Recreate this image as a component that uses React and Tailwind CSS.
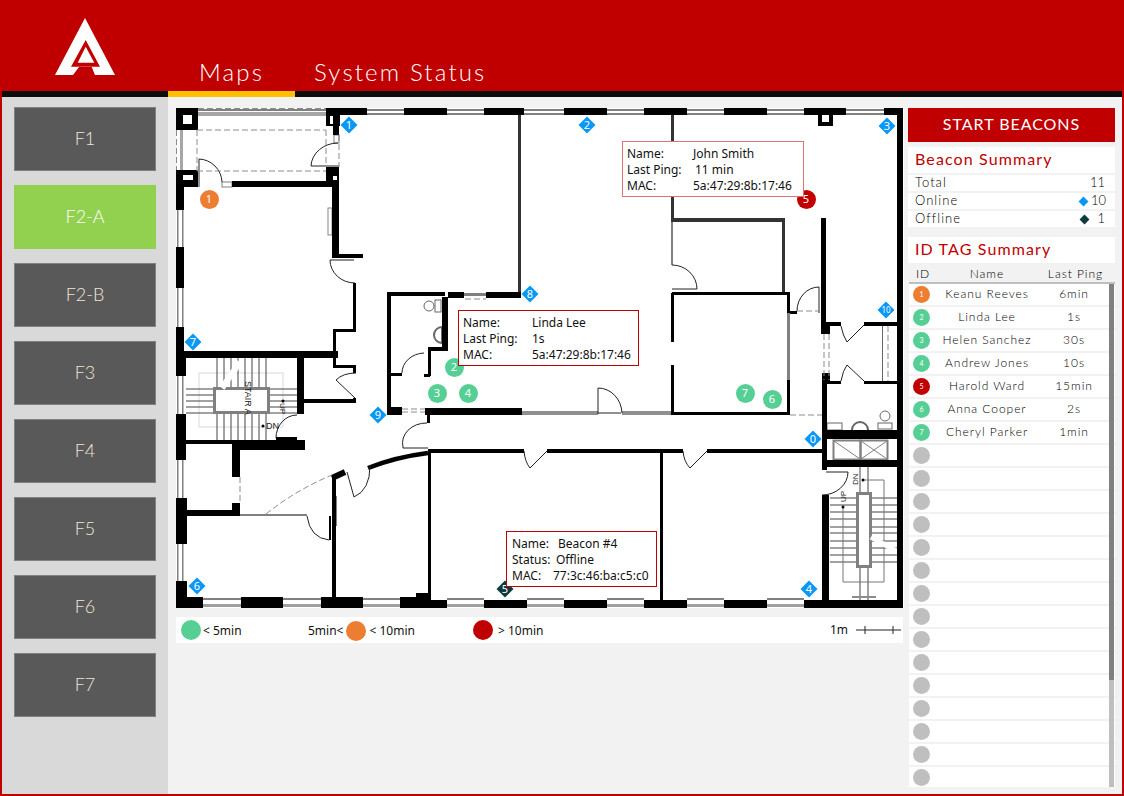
const uiFont = { fontFamily: 'Lato, sans-serif' };

const floors = ['F1', 'F2-A', 'F2-B', 'F3', 'F4', 'F5', 'F6', 'F7'];

const tags = [
    { id: 1, name: 'Keanu Reeves', ping: '6min', color: 'bg-[#ed7d31]' },
    { id: 2, name: 'Linda Lee', ping: '1s', color: 'bg-[#56cf95]' },
    { id: 3, name: 'Helen Sanchez', ping: '30s', color: 'bg-[#56cf95]' },
    { id: 4, name: 'Andrew Jones', ping: '10s', color: 'bg-[#56cf95]' },
    { id: 5, name: 'Harold Ward', ping: '15min', color: 'bg-[#c00000]' },
    { id: 6, name: 'Anna Cooper', ping: '2s', color: 'bg-[#56cf95]' },
    { id: 7, name: 'Cheryl Parker', ping: '1min', color: 'bg-[#56cf95]' },
    ...Array.from({ length: 15 }, () => ({ color: 'bg-[#bfbfbf]' })),
];

// walls as [x1, y1, x2, y2] in page coordinates
const walls = [
    // outer pieces
    [176, 108, 198, 130], [176, 170, 198, 187], [176, 187, 184, 210], [176, 247, 184, 288], [176, 327, 184, 351],
    [176, 351, 186, 376], [176, 414, 186, 460], [176, 498, 187, 544], [176, 581, 187, 608], [176, 597, 203, 608],
    [326, 108, 367, 115], [404, 108, 447, 115], [484, 108, 524, 115], [564, 108, 607, 115], [644, 108, 687, 115],
    [724, 108, 767, 115], [804, 108, 846, 115], [884, 108, 903, 115], [897, 108, 903, 608],
    [241, 597, 283, 608], [321, 597, 363, 608], [400, 597, 427, 608], [416, 593, 431, 600], [427, 600, 447, 608],
    [484, 600, 527, 608], [564, 600, 607, 608], [644, 600, 687, 608], [724, 600, 767, 608], [804, 600, 903, 608],
    // upper left room
    [326, 108, 340, 126], [333, 126, 339, 135], [326, 167, 339, 187], [232, 181, 332, 187], [332, 167, 339, 255],
    [332, 254, 363, 258], [353, 283, 356, 331], [333, 329, 356, 332], [333, 330, 336, 353], [181, 351, 338, 358],
    [333, 352, 336, 368], [333, 365, 356, 368], [353, 365, 356, 373], [353, 398, 356, 403], [297, 358, 304, 414],
    [304, 399, 356, 403],
    // stair lower wall
    [185, 440, 232, 444], [232, 440, 305, 450], [276, 437, 297, 440], [232, 444, 240, 477], [232, 503, 240, 516],
    [185, 510, 240, 516], [329, 516, 331, 540], [332, 478, 336, 597],
    // middle offices
    [387, 292, 391, 415], [387, 292, 445, 296], [442, 297, 448, 350], [448, 292, 464, 298], [486, 292, 521, 298],
    [428, 347, 448, 351], [428, 347, 431, 376], [424, 374, 430, 377], [390, 373, 402, 376], [387, 407, 402, 415],
    [425, 408, 522, 415], [427, 415, 430, 423], [428, 452, 431, 593], [428, 449, 524, 453], [547, 449, 683, 453],
    [660, 452, 663, 600], [707, 449, 822, 453],
    // right rooms
    [671, 293, 674, 342], [671, 365, 674, 415], [671, 412, 790, 415], [672, 292, 790, 295], [787, 292, 790, 313],
    [787, 380, 790, 415], [790, 311, 797, 314],
    [821, 218, 826, 334], [822, 322, 830, 334], [826, 322, 841, 326], [864, 322, 897, 326],
    [822, 373, 830, 381], [826, 381, 841, 384], [864, 381, 897, 384], [822, 381, 827, 470], [827, 430, 897, 439],
    [827, 460, 897, 467], [822, 495, 829, 600],
];

// the lighter partition walls that read as dark grey in the plan
const partitions = [
    [518, 110, 521, 292], [671, 110, 674, 222], [672, 218, 785, 222], [782, 220, 785, 292],
];

const windowsH = [[198, 326], [367, 404], [447, 484], [524, 564], [607, 644], [687, 724], [767, 804], [846, 884]];
const windowsB = [[203, 241], [283, 321], [363, 400], [447, 484], [527, 564], [607, 644], [687, 724], [767, 804]];
const windowsV = [[210, 247], [288, 327], [376, 414], [460, 498], [544, 581]];

const doors = [
    'M199 187V159A24 24 0 0 1 222 182',
    'M338 143A27 24 0 0 0 311 166H339',
    'M354 260H330A25 23 0 0 0 355 283',
    'M356 373Q343 373 336 380L355 398',
    'M297 415A21 23 0 0 0 276 438',
    'M424 353A23 20 0 0 0 402 373',
    'M347 472L354 497Q370 490 370 466',
    'M307 516Q310 538 329 540',
    'M403 447A24 20 0 0 1 427 423',
    'M428 448H403V447',
    'M524 451Q525 462 530 468L547 451',
    'M683 451Q684 462 690 468L707 451',
    'M598 414V388A24 26 0 0 1 622 413',
    'M598 413H621',
    'M672 265A25 24 0 0 1 697 289H672',
    'M819 313V287A22 24 0 0 0 797 311',
    'M841 326Q843 336 847 342L864 325',
    'M841 381Q843 370 847 365L864 381',
    'M826 472H848A26 23 0 0 1 822 495',
];

const leftTreadsX = [217, 224, 231, 238, 245, 252, 259, 266];
const leftTreadsY = [389, 395, 401, 407, 413];
const rightTreadsY = [498, 505, 512, 519, 527, 533, 541, 548, 555, 562];

function FloorPlan() {
    return (
        <svg className="block w-[728px] h-[500px]" viewBox="176 108 728 500">
            <rect x="176" y="108" width="728" height="500" fill="#fff" />
            {/* exterior glazing */}
            {windowsH.map(([a, b]) => (
                <g key={a}>
                    <rect x={a} y="109" width={b - a} height="2" fill="#808080" />
                    <rect x={a} y="113" width={b - a} height="2" fill="#808080" />
                </g>
            ))}
            {windowsB.map(([a, b]) => (
                <g key={a}>
                    <rect x={a} y="598" width={b - a} height="2" fill="#808080" />
                    <rect x={a} y="604" width={b - a} height="3" fill="#a0a0a0" />
                </g>
            ))}
            {windowsV.map(([a, b]) => (
                <g key={a}>
                    <rect x="177" y={a} width="1.5" height={b - a} fill="#808080" />
                    <rect x="182" y={a} width="1.5" height={b - a} fill="#808080" />
                </g>
            ))}
            <rect x="180" y="130" width="3" height="40" fill="#a6a6a6" />
            <rect x="222" y="182" width="10" height="5" fill="#fff" stroke="#808080" />
            <rect x="334" y="135" width="5" height="8" fill="#fff" stroke="#808080" />

            {/* stair A */}
            <rect x="199" y="373" width="84" height="54" fill="none" stroke="#d9d9d9" />
            {leftTreadsX.map((x) => (
                <g key={x} stroke="#444">
                    <line x1={x} y1="358" x2={x} y2="387" />
                    <line x1={x} y1="413" x2={x} y2="440" />
                </g>
            ))}
            {leftTreadsY.map((y) => (
                <g key={y} stroke="#444">
                    <line x1="186" y1={y} x2="213" y2={y} />
                    <line x1="269" y1={y} x2="297" y2={y} />
                </g>
            ))}
            <rect x="214.5" y="388.5" width="54" height="24" fill="#fff" stroke="#808080" strokeWidth="3" />
            <path d="M222 388L240 362" stroke="#fff" strokeWidth="6" />
            <text transform="translate(245 381) rotate(90)" fontSize="9" fontFamily="Liberation Sans, sans-serif" fill="#222">STAIR A</text>
            <text transform="translate(280 403) rotate(90)" fontSize="8" fontFamily="Liberation Sans, sans-serif" fill="#222">UP</text>
            <circle cx="283" cy="401" r="1.5" fill="#000" />
            <circle cx="263" cy="426" r="1.5" fill="#000" />
            <text x="266" y="429" fontSize="9" fontFamily="Liberation Sans, sans-serif" fill="#222">DN</text>

            {/* right stair */}
            {rightTreadsY.map((y) => (
                <g key={y} stroke="#444">
                    <line x1="830" y1={y} x2="856" y2={y} />
                    <line x1="872" y1={y} x2="897" y2={y} />
                </g>
            ))}
            <g stroke="#444" fill="none">
                <line x1="860" y1="467" x2="860" y2="600" />
                <line x1="868" y1="467" x2="868" y2="600" />
                <path d="M863 480H884V582H843V507" stroke="#777" />
            </g>
            <rect x="857.5" y="493.5" width="13" height="73" fill="#fff" stroke="#808080" strokeWidth="3" />
            <path d="M871 537L898 552" stroke="#fff" strokeWidth="5" />
            <circle cx="863" cy="480" r="1.5" fill="#000" />
            <circle cx="843" cy="507" r="1.5" fill="#000" />
            <text transform="translate(858 485) rotate(-90)" fontSize="8" fontFamily="Liberation Sans, sans-serif" fill="#222">DN</text>
            <text transform="translate(846 502) rotate(-90)" fontSize="8" fontFamily="Liberation Sans, sans-serif" fill="#222">UP</text>
            <line x1="852" y1="597" x2="876" y2="597" stroke="#8c8c8c" strokeWidth="2" />

            {/* elevators */}
            <g stroke="#808080" fill="none">
                <rect x="833.5" y="440.5" width="27" height="19" strokeWidth="2" />
                <rect x="860.5" y="440.5" width="27" height="19" strokeWidth="2" />
                <path d="M834 441L860 459M861 459L887 441M861 441L887 459" />
            </g>

            {/* plumbing */}
            <g stroke="#666" fill="#fff">
                <circle cx="429" cy="306" r="5" />
                <rect x="435" y="300" width="6" height="12" />
                <path d="M442 327A8 8 0 0 0 442 343Z" strokeWidth="2" />
                <circle cx="885" cy="416" r="5" />
                <rect x="878" y="423" width="14" height="6" />
                <path d="M852 430A8 8 0 0 1 860 422A8 8 0 0 1 868 430" strokeWidth="2" />
                <rect x="827" y="423" width="15" height="7" />
            </g>

            {/* grey partitions */}
            <rect x="240" y="514" width="67" height="2" fill="#808080" />
            <rect x="522" y="411" width="76" height="4" fill="#8f8f8f" />
            <rect x="622" y="411" width="49" height="4" fill="#8f8f8f" />
            <rect x="671" y="222" width="2" height="43" fill="#808080" />
            <rect x="787" y="313" width="3" height="67" fill="#808080" />
            <rect x="464" y="293" width="22" height="3" fill="#808080" />
            <rect x="328" y="208" width="4" height="27" fill="#fff" stroke="#888" />
            <rect x="335" y="496" width="2" height="30" fill="#808080" />
            <rect x="198" y="112" width="128" height="4" fill="#a6a6a6" />
            <rect x="882" y="326" width="1" height="55" fill="#666" />

            {/* walls */}
            {partitions.map(([x1, y1, x2, y2]) => (
                <rect key={`${x1}-${y1}`} x={x1} y={y1} width={x2 - x1} height={y2 - y1} fill="#333" />
            ))}
            {walls.map(([x1, y1, x2, y2]) => (
                <rect key={`${x1}-${y1}-${x2}-${y2}`} x={x1} y={y1} width={x2 - x1} height={y2 - y1} fill="#000" />
            ))}
            <rect x="183" y="115" width="9" height="9" fill="#fff" />
            <rect x="183" y="175" width="10" height="5" fill="#fff" />
            <rect x="330" y="116" width="3" height="8" fill="#fff" />
            <rect x="333" y="176" width="4" height="4" fill="#fff" />
            <rect x="818" y="115" width="15" height="11" fill="#000" />
            <rect x="822" y="115" width="7" height="7" fill="#fff" />
            <path d="M332 478L345 472" stroke="#000" strokeWidth="6" />
            <path d="M368 468Q396 457 428 453" stroke="#000" strokeWidth="4.5" fill="none" />

            {/* doors */}
            {doors.map((d) => (
                <path key={d} d={d} fill="none" stroke="#222" strokeWidth="1" />
            ))}

            {/* dashed outlines */}
            <g stroke="#8c8c8c" fill="none" strokeDasharray="6 3">
                <path d="M198 108.5H326M176.500 130V170M197 130H326M197 130V171M197 171H326M326 130V166M339 135V167" />
                <path d="M266 514Q296 490 332 475M240 477V503" />
                <path d="M797 311H819M824 334V380M829 334V380M790 415H822M402 409H425M402 412H425M465 299H486" />
                <path d="M888 326V381" />
            </g>
        </svg>
    );
}

function Diamond({ x, y, n, dark, small }) {
    return (
        <div className="absolute w-0 h-0" style={{ left: x - 176, top: y - 108 }}>
            <div className={`absolute -left-[6px] -top-[6px] w-3 h-3 rotate-45 ${dark ? 'bg-[#0d3b3b]' : 'bg-[#0a97f5]'}`} />
            <span className={`absolute -left-[8px] -top-[8px] w-4 h-4 flex items-center justify-center text-white ${small ? 'text-[8px]' : 'text-[11px]'}`} style={{ fontFamily: 'Noto Sans, sans-serif' }}>{n}</span>
        </div>
    );
}

function Dot({ x, y, n, color }) {
    return (
        <div className={`absolute w-[19px] h-[19px] rounded-full flex items-center justify-center text-white text-[11px] ${color}`} style={{ left: x - 185.5, top: y - 117.5, fontFamily: 'Noto Sans, sans-serif' }}>
            {n}
        </div>
    );
}

function Popup({ x, y, w, col, rows, faded, pad }) {
    return (
        <div
            className={`absolute bg-white border h-[56px] pt-[4px] text-[12px] leading-[16px] text-[#111] ${faded ? 'border-[#df7373]' : 'border-[#c00000]'}`}
            style={{ left: x - 176, top: y - 108, width: w, paddingLeft: pad, fontFamily: 'Noto Sans, sans-serif' }}
        >
            {rows.map(([k, v, off]) => (
                <div key={k} className="flex whitespace-nowrap">
                    <span style={{ width: col + (off || 0) }}>{k}</span>
                    <span>{v}</span>
                </div>
            ))}
        </div>
    );
}

export default function App() {
    return (
        <div className="w-[1124px] h-[796px] overflow-hidden flex flex-col bg-[#f2f2f2] border-l-2 border-r-2 border-t border-b-2 border-[#c00000]" style={uiFont}>
            <header className="h-[96px] shrink-0 bg-[#c00000] flex flex-col">
                <div className="flex-1 flex relative">
                    <div className="w-[166px] shrink-0 pl-[53px] pt-[17px]">
                        <svg width="60" height="57" viewBox="0 0 60 57">
                            <path d="M30 0L60 57H40L36.700 49H24L18 57H0Z" fill="#fff" />
                            <path d="M30.700 22L45 48.700H16Z" fill="#c00000" />
                            <path d="M30.700 28.700L39.300 44.700H22.700Z" fill="#fff" />
                        </svg>
                    </div>
                    <nav className="flex text-white text-[24px] font-light tracking-[0.09em] leading-none pt-[59px]">
                        <span className="w-[127px] text-center">Maps</span>
                        <span className="pl-[19px]">System Status</span>
                    </nav>
                </div>
                <div className="h-[6px] bg-[#0d0d0d] flex">
                    <div className="w-[166px]" />
                    <div className="w-[127px] bg-[#ffc000]" />
                </div>
            </header>

            <div className="flex-1 flex min-h-0">
                <aside className="w-[166px] shrink-0 bg-[#d9d9d9] pl-[12px] pt-[10px] flex flex-col gap-[14px]">
                    {floors.map((f) => (
                        <button
                            key={f}
                            className={`w-[142px] h-[64px] shrink-0 pb-[2px] flex items-center justify-center text-[18px] font-light text-[#f0e6d8] ${f === 'F2-A' ? 'bg-[#92d050] text-white' : 'bg-[#595959] border border-[#808080]'}`}
                        >
                            {f}
                        </button>
                    ))}
                </aside>

                <main className="w-[740px] shrink-0 pl-[8px] pt-[11px]">
                    <div className="relative w-[728px] h-[500px]">
                        <FloorPlan />
                        <Diamond x={349} y={125} n="1" />
                        <Diamond x={587} y={125} n="2" />
                        <Diamond x={887} y={126} n="3" />
                        <Diamond x={886} y={310} n="10" small />
                        <Diamond x={530} y={294} n="8" />
                        <Diamond x={193} y={342} n="7" />
                        <Diamond x={378} y={415} n="9" />
                        <Diamond x={813} y={439} n="0" />
                        <Diamond x={197} y={586} n="6" />
                        <Diamond x={809} y={589} n="4" />
                        <Diamond x={505} y={589} n="5" dark />
                        <Dot x={209} y={199} n="1" color="bg-[#ed7d31]" />
                        <Dot x={806} y={199} n="5" color="bg-[#c00000]" />
                        <Dot x={454} y={367} n="2" color="bg-[#56cf95]" />
                        <Dot x={437} y={393} n="3" color="bg-[#56cf95]" />
                        <Dot x={468} y={393} n="4" color="bg-[#56cf95]" />
                        <Dot x={745} y={393} n="7" color="bg-[#56cf95]" />
                        <Dot x={772} y={399} n="6" color="bg-[#56cf95]" />
                        <Popup x={622} y={141} w={182} col={66} pad={4} faded rows={[['Name:', 'John Smith'], ['Last Ping:', '11 min', 2], ['MAC:', '5a:47:29:8b:17:46']]} />
                        <Popup x={458} y={310} w={181} col={69} pad={4} rows={[['Name:', 'Linda Lee'], ['Last Ping:', '1s'], ['MAC:', '5a:47:29:8b:17:46']]} />
                        <Popup x={506} y={531} w={151} col={44} pad={5} rows={[['Name:', 'Beacon #4', 2], ['Status:', 'Offline'], ['MAC:', '77:3c:46:ba:c5:c0', -3]]} />
                    </div>

                    <div className="relative mt-[9px] w-[727px] h-[26px] bg-white text-[12px] text-[#111]" style={{ fontFamily: 'Noto Sans, sans-serif' }}>
                        <div className="absolute left-[5px] top-[3px] flex items-center gap-[2px]">
                            <span className="w-[20px] h-[20px] rounded-full bg-[#56cf95]" />
                            <span className="pt-[1px]">&lt; 5min</span>
                        </div>
                        <div className="absolute left-[132px] top-[4px] flex items-center gap-[3px]">
                            <span>5min&lt;</span>
                            <span className="w-[20px] h-[20px] rounded-full bg-[#ed7d31]" />
                            <span>&lt; 10min</span>
                        </div>
                        <div className="absolute left-[297px] top-[3px] flex items-center gap-[5px]">
                            <span className="w-[20px] h-[20px] rounded-full bg-[#c00000]" />
                            <span className="pt-[1px]">&gt; 10min</span>
                        </div>
                        <div className="absolute left-[654px] top-[4px] flex items-center gap-[8px]">
                            <span>1m</span>
                            <svg width="46" height="10" viewBox="0 0 46 10" stroke="#222" fill="none">
                                <path d="M0 5H45M9 1V9M37 1V9" />
                            </svg>
                        </div>
                    </div>
                </main>

                <section className="w-[207px] shrink-0 pt-[11px] text-black flex flex-col">
                    <button className="h-[34px] shrink-0 pb-[2px] bg-[#c00000] text-white text-[16px] tracking-[0.06em] flex items-center justify-center">START BEACONS</button>
                    <div className="mt-[5px] h-[26px] shrink-0 pb-[2px] bg-white px-[7px] flex items-center text-[#c00000] text-[16px] tracking-[0.07em]">Beacon Summary</div>
                    <div className="mt-[2px] flex flex-col gap-[2px] text-[13px] font-light">
                        <div className="h-[16px] bg-white pl-[7px] pr-[10px] flex items-center justify-between"><span className="tracking-[0.08em]">Total</span><span>11</span></div>
                        <div className="h-[16px] bg-white pl-[7px] pr-[9px] flex items-center justify-between">
                            <span className="tracking-[0.08em]">Online</span>
                            <span className="flex items-center gap-[4px]"><i className="w-[7px] h-[7px] rotate-45 bg-[#0a97f5]" />10</span>
                        </div>
                        <div className="h-[16px] bg-white pl-[7px] pr-[10px] flex items-center justify-between">
                            <span className="tracking-[0.08em]">Offline</span>
                            <span className="flex items-center gap-[9px]"><i className="w-[7px] h-[7px] rotate-45 bg-[#0d3b3b]" />1</span>
                        </div>
                    </div>
                    <div className="mt-[10px] h-[26px] shrink-0 pb-[2px] bg-white px-[7px] flex items-center text-[#c00000] text-[16px] tracking-[0.07em]">ID TAG Summary</div>
                    <div className="h-[19px] shrink-0 pt-[3px] flex items-center text-[12px] font-light tracking-[0.08em]">
                        <span className="w-[30px] text-center">ID</span>
                        <span className="w-[98px] text-center">Name</span>
                        <span className="w-[74px] pl-[5px] text-center">Last Ping</span>
                    </div>
                    <div className="relative ml-[1px] w-[206px] h-[505px] border-t-2 border-[#bfbfbf] flex flex-col overflow-hidden">
                        {tags.map((t, i) => (
                            <div key={i} className="h-[23px] shrink-0 bg-white border-b-2 border-[#f2f2f2] flex items-center text-[12px] font-light tracking-[0.08em]">
                                <span className={`ml-[4px] w-[17px] h-[17px] rounded-full flex items-center justify-center text-white text-[7px] font-normal tracking-normal ${t.color}`}>{t.id}</span>
                                <span className="w-[100px] ml-[7px] pb-[2px] text-center whitespace-nowrap">{t.name}</span>
                                <span className="w-[74px] pb-[2px] text-center">{t.ping}</span>
                            </div>
                        ))}
                        <div className="absolute right-[1px] top-0 bottom-0 w-[5px] bg-[#bfbfbf]">
                            <div className="h-[396px] bg-[#808080]" />
                        </div>
                    </div>
                </section>
            </div>
        </div>
    );
}
